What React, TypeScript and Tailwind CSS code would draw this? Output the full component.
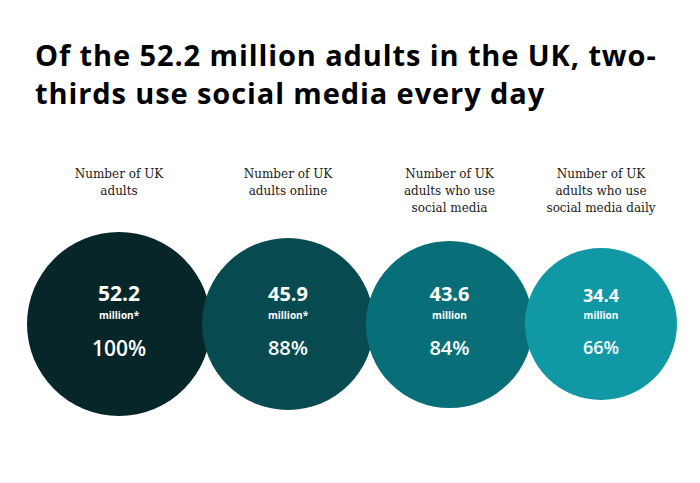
const stats = [
  {
    label: ["Number of UK", "adults"],
    value: "52.2",
    unit: "million*",
    share: "100%",
    size: "w-[184px] h-[184px]",
    col: "w-[184px]",
    color: "bg-[#072629]",
    big: "text-[21px]",
  },
  {
    label: ["Number of UK", "adults online"],
    value: "45.9",
    unit: "million*",
    share: "88%",
    size: "w-[172px] h-[172px]",
    col: "w-[172px] -ml-[9px]",
    color: "bg-[#074b51]",
    big: "text-[20px]",
  },
  {
    label: ["Number of UK", "adults who use", "social media"],
    value: "43.6",
    unit: "million",
    share: "84%",
    size: "w-[167px] h-[167px]",
    col: "w-[167px] -ml-[8px]",
    color: "bg-[#086f78]",
    big: "text-[20px]",
  },
  {
    label: ["Number of UK", "adults who use", "social media daily"],
    value: "34.4",
    unit: "million",
    share: "66%",
    size: "w-[152px] h-[152px]",
    col: "w-[152px] -ml-[8px]",
    color: "bg-[#1099a5]",
    big: "text-[18px]",
  },
];

const App = () => {
  return (
    <div className="w-[700px] h-[483px] bg-white overflow-hidden font-['Open_Sans',sans-serif]">
      <h1 className="pl-[35px] pt-[36px] text-[29px] leading-[38px] font-bold text-black tracking-[0.9px] whitespace-nowrap">
        Of the 52.2 million adults in the UK, two-
        <br />
        thirds use social media every day
      </h1>

      <div className="flex pl-[27px] mt-[54px]">
        {stats.map((s) => (
          <div key={s.value} className={`flex flex-col items-center ${s.col}`}>
            <div className="h-[63px] whitespace-nowrap text-center text-[12px] leading-[17px] text-[#1a1a1a] font-['DejaVu_Serif',serif]">
              {s.label.map((l) => (
                <div key={l}>{l}</div>
              ))}
            </div>
            <div className="h-[190px] flex items-center justify-center">
              <div
                className={`${s.size} ${s.color} rounded-full flex flex-col items-center justify-center text-white`}
              >
                <div className={`${s.big} font-bold leading-none`}>{s.value}</div>
                <div className="text-[10px] font-bold leading-none mt-[6px]">{s.unit}</div>
                <div className={`${s.big} font-semibold leading-none mt-[18px] mb-[6px]`}>{s.share}</div>
              </div>
            </div>
          </div>
        ))}
      </div>
    </div>
  );
};

export default App;
